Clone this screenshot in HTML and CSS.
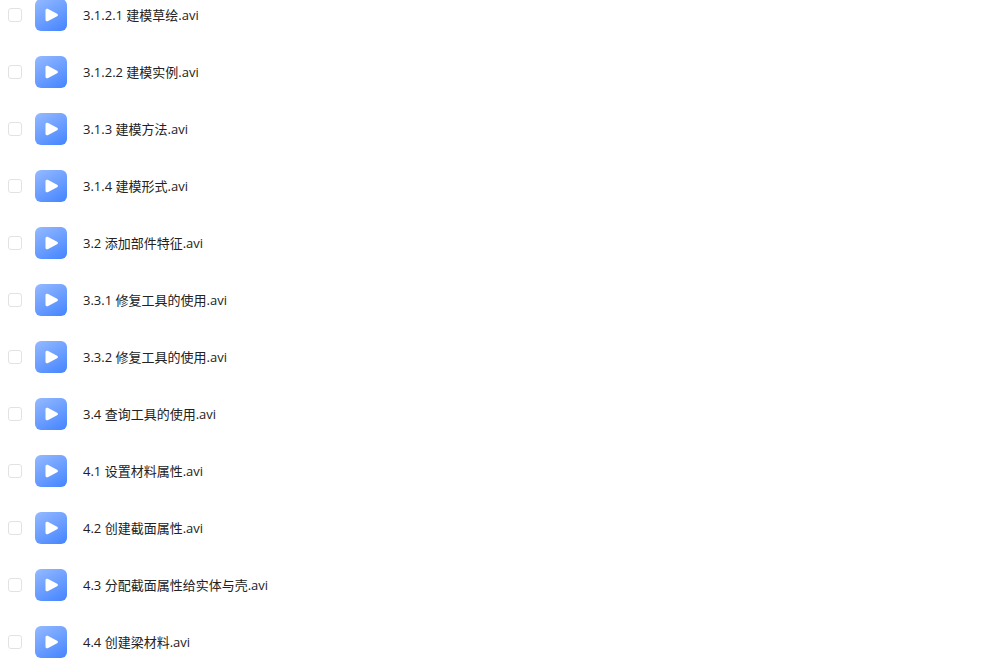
FILE: index.html
```html
<!DOCTYPE html>
<html lang="zh-CN">
<head>
<meta charset="utf-8">
<title>文件列表</title>
<link rel="stylesheet" href="styles.css">
</head>
<body>
<svg class="defs" width="0" height="0" aria-hidden="true">
  <defs>
    <linearGradient id="tile" x1="0.2" y1="0" x2="0.8" y2="1">
      <stop offset="0" stop-color="#8fb6ff"/>
      <stop offset="1" stop-color="#4a88ff"/>
    </linearGradient>
    <symbol id="video" viewBox="0 0 32 32">
      <rect width="32" height="32" rx="6" fill="url(#tile)"/>
      <path d="M12 11.200v9.600L21.400 16z" fill="#fff" stroke="#fff" stroke-width="3" stroke-linejoin="round"/>
    </symbol>
  </defs>
</svg>
<ul class="files">
  <li><label class="file"><input class="check" type="checkbox"><svg class="icon" aria-hidden="true"><use href="#video"/></svg><span class="name">3.1.2.1 建模草绘.avi</span></label></li>
  <li><label class="file"><input class="check" type="checkbox"><svg class="icon" aria-hidden="true"><use href="#video"/></svg><span class="name">3.1.2.2 建模实例.avi</span></label></li>
  <li><label class="file"><input class="check" type="checkbox"><svg class="icon" aria-hidden="true"><use href="#video"/></svg><span class="name">3.1.3 建模方法.avi</span></label></li>
  <li><label class="file"><input class="check" type="checkbox"><svg class="icon" aria-hidden="true"><use href="#video"/></svg><span class="name">3.1.4 建模形式.avi</span></label></li>
  <li><label class="file"><input class="check" type="checkbox"><svg class="icon" aria-hidden="true"><use href="#video"/></svg><span class="name">3.2 添加部件特征.avi</span></label></li>
  <li><label class="file"><input class="check" type="checkbox"><svg class="icon" aria-hidden="true"><use href="#video"/></svg><span class="name">3.3.1 修复工具的使用.avi</span></label></li>
  <li><label class="file"><input class="check" type="checkbox"><svg class="icon" aria-hidden="true"><use href="#video"/></svg><span class="name">3.3.2 修复工具的使用.avi</span></label></li>
  <li><label class="file"><input class="check" type="checkbox"><svg class="icon" aria-hidden="true"><use href="#video"/></svg><span class="name">3.4 查询工具的使用.avi</span></label></li>
  <li><label class="file"><input class="check" type="checkbox"><svg class="icon" aria-hidden="true"><use href="#video"/></svg><span class="name">4.1 设置材料属性.avi</span></label></li>
  <li><label class="file"><input class="check" type="checkbox"><svg class="icon" aria-hidden="true"><use href="#video"/></svg><span class="name">4.2 创建截面属性.avi</span></label></li>
  <li><label class="file"><input class="check" type="checkbox"><svg class="icon" aria-hidden="true"><use href="#video"/></svg><span class="name">4.3 分配截面属性给实体与壳.avi</span></label></li>
  <li><label class="file"><input class="check" type="checkbox"><svg class="icon" aria-hidden="true"><use href="#video"/></svg><span class="name">4.4 创建梁材料.avi</span></label></li>
</ul>
</body>
</html>
```

FILE: styles.css
```css
body {
  margin: 0;
  background: #fff;
  color: #222;
  font: 13px/20px "Open Sans", "Noto Sans CJK SC", sans-serif;
}

.defs {
  position: absolute;
}

.files {
  display: grid;
  gap: 25px;
  margin: -1px 0 0;
  padding: 0 8px;
  list-style: none;
}

.file {
  display: flex;
  align-items: center;
}

.check {
  appearance: none;
  box-sizing: border-box;
  width: 14px;
  height: 14px;
  margin: 0 13px 0 0;
  border: 1px solid #e2e2e4;
  border-radius: 3px;
  background: #fff;
}

.check:checked {
  background: #4a86ff;
}

.icon {
  width: 32px;
  height: 32px;
  margin-right: 16px;
}
```
